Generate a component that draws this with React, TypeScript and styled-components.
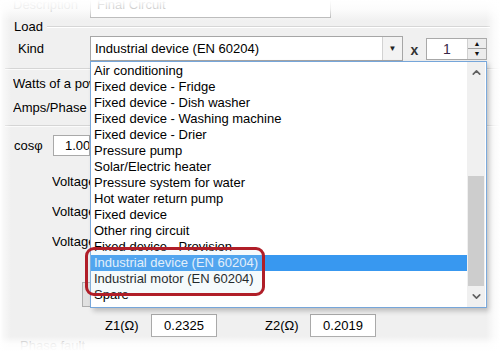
import React from "react";
import styled, { createGlobalStyle } from "styled-components";
import { ChevronUp, ChevronDown } from "lucide-react";

const GlobalStyle = createGlobalStyle`
  html, body { margin: 0; padding: 0; background: #fff; }
  body { font-family: "Liberation Sans", Arial, sans-serif; }
`;

const Stage = styled.div`
  position: relative;
  width: 500px;
  height: 352px;
  overflow: hidden;
  background: #f0f0f0;
  font-family: "Liberation Sans", Arial, sans-serif;
  font-size: 13px;
  color: #000;
`;

const Form = styled.div`
  display: flex;
  flex-direction: column;
  padding-left: 13px;
`;

const Row = styled.div<{ $h: number; $mt?: number; $pl?: number }>`
  display: flex;
  align-items: center;
  flex-shrink: 0;
  height: ${(p) => p.$h}px;
  margin-top: ${(p) => p.$mt ?? 0}px;
  padding-left: ${(p) => p.$pl ?? 0}px;
`;

const Label = styled.span<{ $w?: number; $indent?: number; $faint?: boolean }>`
  box-sizing: border-box;
  flex-shrink: 0;
  width: ${(p) => (p.$w ? `${p.$w}px` : "auto")};
  padding-left: ${(p) => p.$indent ?? 0}px;
  white-space: nowrap;
  overflow: hidden;
  line-height: 16px;
  color: ${(p) => (p.$faint ? "#9a9a9a" : "#000")};
`;

const TextBox = styled.div<{ $w: number; $h: number; $center?: boolean; $pad?: number }>`
  box-sizing: border-box;
  flex-shrink: 0;
  display: flex;
  align-items: center;
  justify-content: ${(p) => (p.$center ? "center" : "flex-start")};
  width: ${(p) => p.$w}px;
  height: ${(p) => p.$h}px;
  padding-left: ${(p) => p.$pad ?? 0}px;
  border: 1px solid #a9a9a9;
  background: #fff;
  white-space: nowrap;
  overflow: hidden;
`;

const GroupHeader = styled.div`
  display: flex;
  align-items: center;
  height: 14px;
  margin-top: 2px;
  flex-shrink: 0;
`;

const GroupLine = styled.div`
  flex: 1;
  height: 1px;
  margin: -2px 10px 0 4px;
  background: #d6d6d6;
  box-shadow: 0 1px 0 #fff;
`;

const Separator = styled.div<{ $mt: number }>`
  height: 1px;
  margin-top: ${(p) => p.$mt}px;
  margin-left: -8px;
  background: #d5d5d5;
  border-bottom: 1px solid #fbfbfb;
  flex-shrink: 0;
`;

const Combo = styled.div`
  box-sizing: border-box;
  display: flex;
  width: 313px;
  height: 25px;
  border: 1px solid #a6a6a6;
  background: #fff;
`;

const ComboText = styled.div`
  flex: 1;
  display: flex;
  align-items: center;
  padding-left: 4px;
  white-space: nowrap;
`;

const ComboButton = styled.div`
  width: 19px;
  display: flex;
  align-items: center;
  justify-content: center;
  border-left: 1px solid #d2d2d2;
  background: #f3f3f3;
  font-size: 8px;
  color: #222;
`;

const XLabel = styled.span`
  width: 23px;
  text-align: center;
  font-size: 14px;
  font-weight: bold;
  color: #333;
  margin-top: 3px;
`;

const Spin = styled.div`
  box-sizing: border-box;
  display: flex;
  width: 61px;
  height: 22px;
  border: 1px solid #a9a9a9;
  background: #fff;
`;

const SpinValue = styled.div`
  flex: 1;
  display: flex;
  align-items: center;
  justify-content: center;
  color: #3a2848;
  font-size: 14px;
`;

const SpinButtons = styled.div`
  width: 18px;
  display: flex;
  flex-direction: column;
  background: #ececec;
  border-left: 1px solid #d0d0d0;
`;

const SpinHalf = styled.div<{ $top?: boolean }>`
  flex: 1;
  display: flex;
  align-items: center;
  justify-content: center;
  font-size: 7px;
  line-height: 1;
  color: #111;
  border-bottom: ${(p) => (p.$top ? "1px solid #a0a0a0" : "none")};
`;

const HiddenButton = styled.div`
  box-sizing: border-box;
  width: 100px;
  height: 25px;
  border: 1px solid #adadad;
  background: #e1e1e1;
`;

const DropList = styled.div`
  position: absolute;
  left: 90px;
  top: 61px;
  width: 397px;
  height: 247px;
  box-sizing: border-box;
  display: flex;
  border: 1px solid #76a6da;
  background: #fff;
  box-shadow: 3px 3px 5px rgba(0, 0, 0, 0.22);
`;

const Items = styled.div`
  flex: 1;
  display: flex;
  flex-direction: column;
  padding-top: 1px;
`;

const Item = styled.div<{ $active?: boolean }>`
  height: 16px;
  line-height: 16px;
  padding-left: 3px;
  white-space: nowrap;
  background: ${(p) => (p.$active ? "#3898f0" : "transparent")};
  color: ${(p) => (p.$active ? "#e8f2fd" : "#000")};
`;

const Scrollbar = styled.div`
  width: 18px;
  margin-right: 1px;
  display: flex;
  flex-direction: column;
  background: #f0f0f0;
`;

const ScrollArrow = styled.div`
  height: 22px;
  display: flex;
  align-items: center;
  justify-content: center;
  color: #606060;
`;

const Track = styled.div`
  flex: 1;
  display: flex;
  flex-direction: column;
`;

const Thumb = styled.div<{ $offset: number; $size: number }>`
  margin: ${(p) => p.$offset}px 1px 0 1px;
  height: ${(p) => p.$size}px;
  background: #cdcdcd;
`;

const RedBox = styled.div`
  position: absolute;
  left: 85px;
  top: 247px;
  width: 180px;
  height: 49px;
  box-sizing: border-box;
  border: 3px solid #b01e28;
  border-radius: 9px;
  background: rgba(200, 225, 240, 0.18);
`;

const Fade = styled.div`
  position: absolute;
  inset: 0;
  pointer-events: none;
  background:
    linear-gradient(to bottom, #fff 0px, rgba(255,255,255,0.8) 9px, rgba(255,255,255,0) 21px),
    linear-gradient(to right, #fff 0px, rgba(255,255,255,0.5) 4px, rgba(255,255,255,0) 11px),
    linear-gradient(to top, #fff 0px, rgba(255,255,255,0.85) 8px, rgba(255,255,255,0) 16px),
    linear-gradient(to left, #fff 0px, rgba(255,255,255,0.7) 6px, rgba(255,255,255,0) 14px);
`;

const items = [
  "Air conditioning",
  "Fixed device - Fridge",
  "Fixed device - Dish washer",
  "Fixed device - Washing machine",
  "Fixed device - Drier",
  "Pressure pump",
  "Solar/Electric heater",
  "Pressure system for water",
  "Hot water return pump",
  "Fixed device",
  "Other ring circuit",
  "Fixed device - Provision",
  "Industrial device (EN 60204)",
  "Industrial motor (EN 60204)",
  "Spare",
];

export default function App() {
  return (
    <>
      <GlobalStyle />
      <Stage>
        <Form>
          <Row $h={27} $mt={-9}>
            <Label $w={77} $faint>Description</Label>
            <TextBox $w={241} $h={26} $pad={6}>Final Circuit</TextBox>
          </Row>
          <GroupHeader>
            <Label $indent={1}>Load</Label>
            <GroupLine />
          </GroupHeader>
          <Row $h={25} $mt={2}>
            <Label $w={77} $indent={5}>Kind</Label>
            <Combo>
              <ComboText>Industrial device (EN 60204)</ComboText>
              <ComboButton>▼</ComboButton>
            </Combo>
            <XLabel>x</XLabel>
            <Spin>
              <SpinValue>1</SpinValue>
              <SpinButtons>
                <SpinHalf $top>▲</SpinHalf>
                <SpinHalf>▼</SpinHalf>
              </SpinButtons>
            </Spin>
          </Row>
          <Separator $mt={7} />
          <Row $h={16} $mt={6}>
            <Label $w={77}>Watts of a power</Label>
          </Row>
          <Row $h={16} $mt={8}>
            <Label $w={77}>Amps/Phase</Label>
          </Row>
          <Separator $mt={9} />
          <Row $h={21} $mt={8}>
            <Label $w={40} $indent={1}>cosφ</Label>
            <TextBox $w={37} $h={21} $pad={11}>1.00</TextBox>
          </Row>
          <Row $h={22} $mt={15} $pl={39}>
            <Label $w={38}>Voltage</Label>
          </Row>
          <Row $h={22} $mt={8} $pl={39}>
            <Label $w={38}>Voltage</Label>
          </Row>
          <Row $h={22} $mt={8} $pl={39}>
            <Label $w={38}>Voltage</Label>
          </Row>
          <Row $h={25} $mt={29} $pl={69}>
            <HiddenButton />
          </Row>
          <Row $h={23} $mt={7} $pl={92}>
            <Label $w={46}>Z1(Ω)</Label>
            <TextBox $w={66} $h={23} $center>0.2325</TextBox>
            <Label $w={48} />
            <Label $w={45}>Z2(Ω)</Label>
            <TextBox $w={66} $h={23} $center>0.2019</TextBox>
          </Row>
          <Row $h={14} $mt={2} $pl={7}>
            <Label $faint>Phase fault</Label>
          </Row>
        </Form>

        <DropList>
          <Items>
            {items.map((t, i) => (
              <Item key={t} $active={i === 12}>{t}</Item>
            ))}
          </Items>
          <Scrollbar>
            <ScrollArrow><ChevronUp size={13} strokeWidth={3} /></ScrollArrow>
            <Track>
              <Thumb $offset={93} $size={110} />
            </Track>
            <ScrollArrow><ChevronDown size={13} strokeWidth={3} /></ScrollArrow>
          </Scrollbar>
        </DropList>

        <RedBox />
        <Fade />
      </Stage>
    </>
  );
}
